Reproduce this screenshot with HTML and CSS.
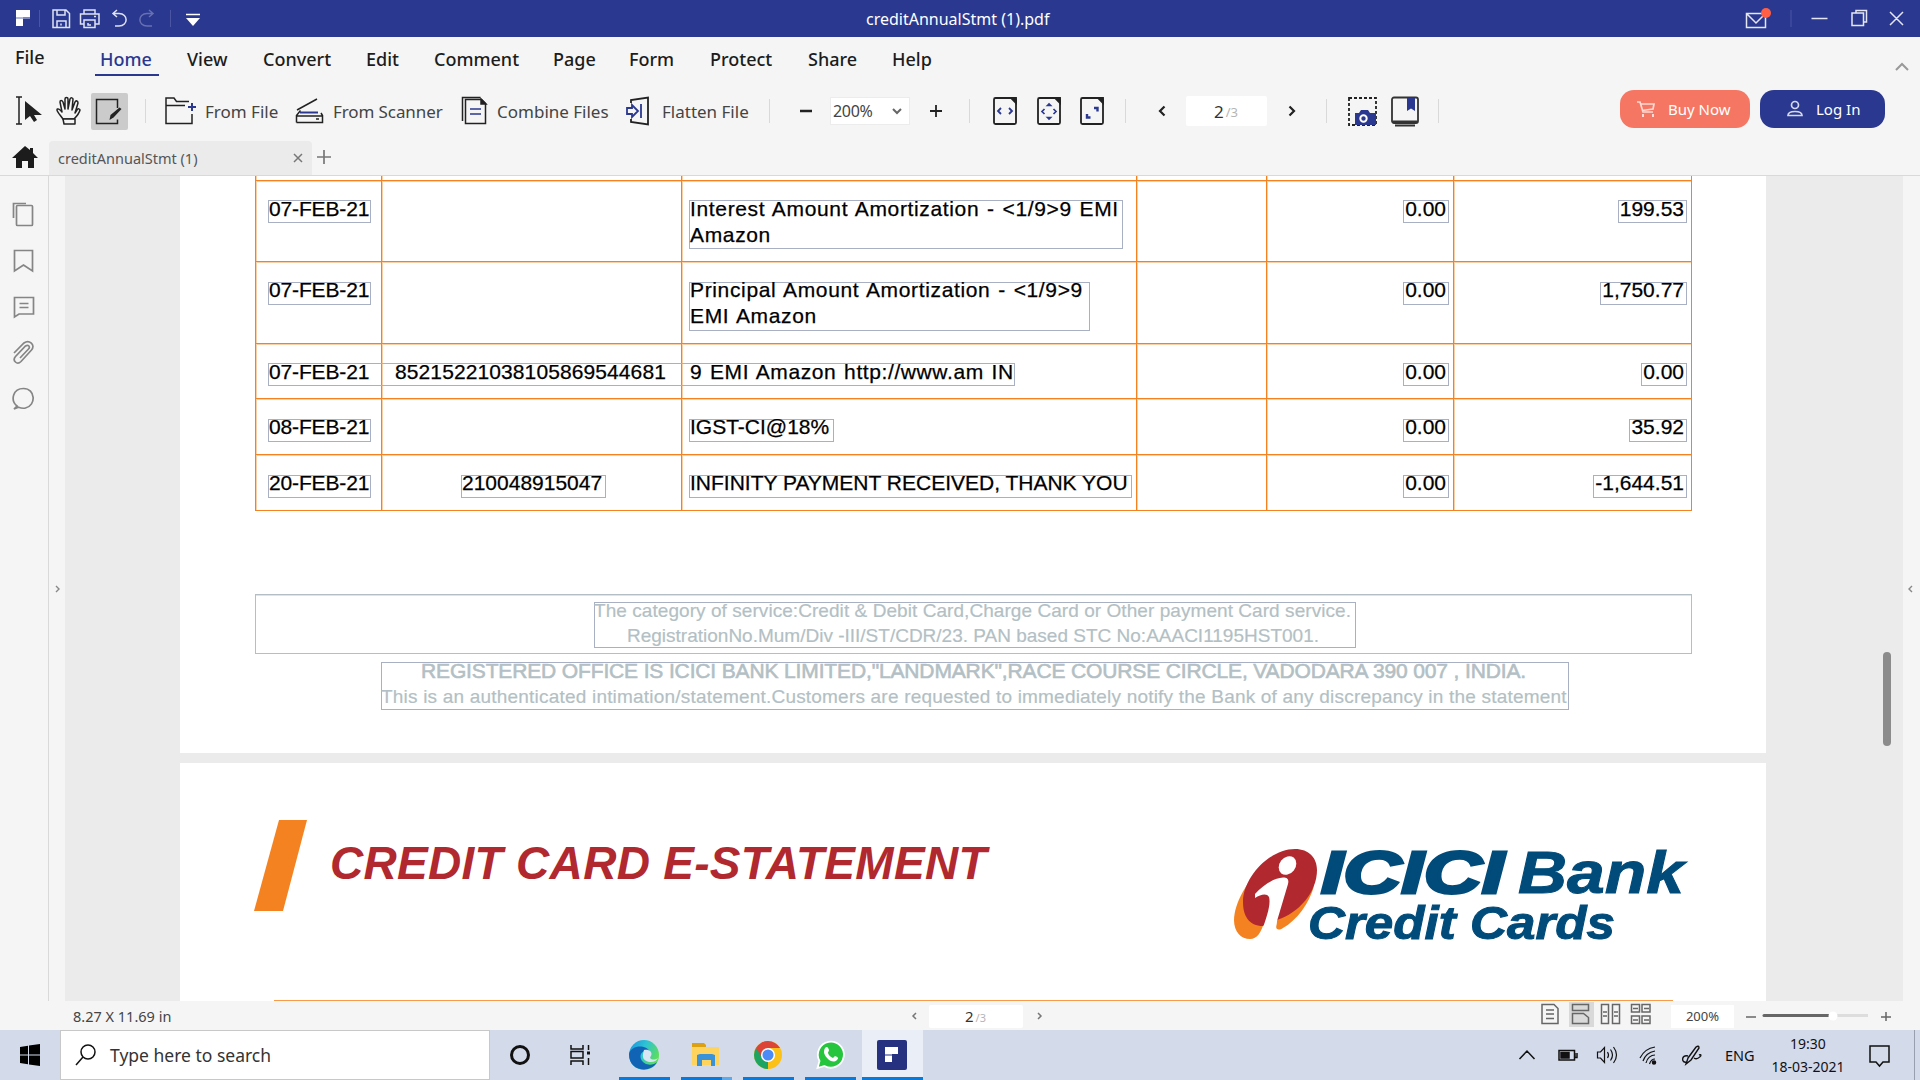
FILE: index.html
```html
<!DOCTYPE html>
<html lang="en">
<head>
<meta charset="utf-8">
<title>creditAnnualStmt (1).pdf</title>
<link rel="stylesheet" href="styles.css">
</head>
<body>
<div class="app">
  <header class="titlebar">
    <svg class="title-tools" width="220" height="37" viewBox="0 0 220 37" fill="none" stroke="#dfe2f2" stroke-width="1.5">
      <path d="M16 10h14v7h-7v9h-7z" fill="#fff" stroke="none"/><path d="M16 18h14" stroke="#9aa2d0"/>
      <path d="M39.500 10v17M170.500 10v17" stroke="#4a55a3" stroke-width="1"/>
      <path d="M53 10h13l3.500 3.500V27.500H53zM57 10v5h8v-5M57 27v-6h9v6M61 23.500v2"/>
      <path d="M84 14v-4h11v4M84 24h-3.500V14h18.500V24H95M84 20h11v7.500H84zM88 23v2h3M94 16.500h2"/>
      <path d="M117 10l-4 3.500 4 3.500M113 13.500h6c9.500 0 9.500 12.500 0 12.500h-4"/>
      <path d="M149 10l4 3.500-4 3.500M153 13.500h-6c-9.500 0-9.500 12.500 0 12.500h5" stroke="#6670b2"/>
      <path d="M186 14.500h14" stroke="#fff"/><path d="M186 18h14l-7 8z" fill="#fff" stroke="none"/>
    </svg>
    <span class="doc-title">creditAnnualStmt (1).pdf</span>
    <svg width="180" height="37" viewBox="1740 0 180 37" fill="none" stroke="#e4e6f4" stroke-width="1.500">
      <path d="M1746.500 13.500h19v14h-19zM1747 14l9 9 9-9"/><circle cx="1766" cy="13" r="5" fill="#ff5f45" stroke="none"/>
      <path d="M1791 10v17" stroke="#4a55a3" stroke-width="1"/>
      <path d="M1811.500 18.500h16M1852 13h11.500v12.500H1852zM1856 13v-2.500h10.500V22h-3M1890 12l13 13M1903 12l-13 13"/>
    </svg>
  </header>

  <nav class="menu">
    <span class="file">File</span><span class="active">Home</span><span>View</span><span>Convert</span><span>Edit</span><span>Comment</span><span>Page</span><span>Form</span><span>Protect</span><span>Share</span><span>Help</span>
    <svg width="16" height="10" viewBox="0 0 16 10" fill="none" stroke="#999" stroke-width="2"><path d="M2 8l6-6 6 6"/></svg>
  </nav>

  <div class="ribbon">
    <svg width="30" height="30" viewBox="0 0 30 30"><path d="M1 1h6M4 1v27M1 28h6" stroke="#222" stroke-width="1.500" fill="none"/><path d="M10 5v19l5-4 4 6 3-2-3-5h8z" fill="#222"/></svg>
    <svg width="28" height="30" viewBox="0 0 28 30" fill="#f5f5f5" stroke="#222" stroke-width="1.500" stroke-linejoin="round"><path d="M8 23C6 20 2 16 2 14c0-2 3-1 5 2L5 6c0-2 2-2 3 0l2 7V3c0-2 3-2 3 0v10l2-10c1-2 3-1 3 0l-1 11 3-8c1-2 3-1 3 1l-3 10 2-3c1-2 3-1 3 0-1 4-4 7-6 9z"/><path d="M8 23h12v5H9z"/></svg>
    <span class="tool-on"><svg width="37" height="37" viewBox="0 0 37 37"><path d="M26.500 15V6.500H5.500v24h21v-4" fill="none" stroke="#222" stroke-width="1.500"/><path d="M18.500 27l1-5 9-7.500 2 1.500-8 8.500z" fill="#222"/></svg></span>
    <i class="sep"></i>
    <svg width="32" height="30" viewBox="0 0 32 30" fill="none" stroke="#222" stroke-width="1.500"><path d="M27 18v9.500H1V2h8l2.500 3.500H24M1 9.500h19"/><path d="M27 7v8M23 11h8" stroke="#2a388f" stroke-width="2"/></svg>
    <span>From File</span>
    <svg width="30" height="30" viewBox="0 0 30 30" fill="none" stroke="#222" stroke-width="1.500"><path d="M2 14L22 3M1.500 26.500v-7l4-5M26 17l1.500 2.500v7h-26M2 20h25M21 23h3"/><path d="M5 16.500h18" stroke="#2a388f" stroke-width="2"/></svg>
    <span class="scan">From Scanner</span>
    <svg width="28" height="30" viewBox="0 0 28 30" fill="none" stroke="#222" stroke-width="1.500"><path d="M4.500 3.500h16l4 4v20h-20zM1.500 25V1.500h18"/><path d="M20 3v5h5z" fill="#222"/><path d="M9 13h11M9 18h11" stroke="#2a388f"/></svg>
    <span>Combine Files</span>
    <svg width="28" height="30" viewBox="0 0 28 30" fill="none" stroke="#222" stroke-width="1.800"><path d="M5 7V4l17-2.500v27L5 26v-3"/><path d="M1 12h5V9l6 6-6 6v-3H1zM15 8v14" stroke="#2a388f" stroke-width="1.800"/></svg>
    <span>Flatten File</span>
    <i class="sep"></i>
    <svg width="14" height="14" viewBox="0 0 14 14" stroke="#222" stroke-width="2.500"><path d="M1 7h12"/></svg>
    <div class="zoom-select"><span>200%</span><svg width="12" height="10" viewBox="0 0 12 10" fill="none" stroke="#666" stroke-width="2"><path d="M2 3l4 4 4-4"/></svg></div>
    <svg width="14" height="14" viewBox="0 0 14 14" stroke="#222" stroke-width="1.800"><path d="M1 7h12M7 1v12"/></svg>
    <i class="sep"></i>
    <svg width="26" height="30" viewBox="0 0 26 30" fill="none" stroke="#222" stroke-width="1.800"><rect x="2" y="2" width="22" height="26" rx="1.500"/><path d="M19 2h5v5z" fill="#222"/><path d="M9 12l-3 3 3 3M17 12l3 3-3 3" stroke="#2a388f"/></svg>
    <svg width="26" height="30" viewBox="0 0 26 30" fill="none" stroke="#222" stroke-width="1.800"><rect x="2" y="2" width="22" height="26" rx="1.500"/><path d="M19 2h5v5z" fill="#222"/><path d="M8.500 13L6 15.500 8.500 18M17.500 13l2.500 2.500-2.500 2.500M11.500 9.500L13 8l1.500 1.500zM11.500 21.500L13 23l1.500-1.500z" stroke="#2a388f" stroke-width="1.700"/></svg>
    <svg width="26" height="30" viewBox="0 0 26 30" fill="none" stroke="#222" stroke-width="1.800"><rect x="2" y="2" width="22" height="26" rx="1.500"/><path d="M19 2h5v5z" fill="#222"/><path d="M15 12h3.500v3.500M8 18v3.500h3.500" stroke="#2a388f" stroke-width="2.400"/></svg>
    <i class="sep"></i>
    <svg width="10" height="14" viewBox="0 0 10 14" fill="none" stroke="#222" stroke-width="2.200"><path d="M7.500 2.500L3 7l4.500 4.500"/></svg>
    <div class="page-box">2<small>/3</small></div>
    <svg width="10" height="14" viewBox="0 0 10 14" fill="none" stroke="#222" stroke-width="2.200"><path d="M2.500 2.500L7 7l-4.500 4.500"/></svg>
    <i class="sep"></i>
    <svg width="32" height="32" viewBox="0 0 32 32" fill="none"><path d="M3 3h27v27H3z" stroke="#222" stroke-width="1.800" stroke-dasharray="3 2"/><path d="M9 30V18h4l2-3h7l2 3h6v12z" fill="#2a388f"/><circle cx="17.500" cy="23.500" r="3.200" stroke="#fff" stroke-width="2"/></svg>
    <svg width="30" height="32" viewBox="0 0 30 32" fill="none" stroke="#333" stroke-width="1.800"><rect x="2" y="2.500" width="26" height="25.500" rx="2"/><path d="M5 30.500h20M3 26.500h24"/><path d="M17 3h8v13l-4-2.500-4 2.500z" fill="#2a388f" stroke="none"/></svg>
    <i class="sep"></i>
    <div class="btn buy"><svg width="20" height="20" viewBox="0 0 20 20" fill="none" stroke="#ffd9d2" stroke-width="1.700"><path d="M1 3h3l3 10h10M5 5h13l-1 5-11 1.500"/><path d="M6 16.500h2M16 16.500h2" stroke-width="3"/></svg><span>Buy Now</span></div>
    <div class="btn login"><svg width="18" height="20" viewBox="0 0 18 20" fill="none" stroke="#d5d9ee" stroke-width="1.700"><circle cx="9" cy="6" r="3.500"/><path d="M2 16.500c0-2.500 3-4 7-4s7 1.500 7 4z"/></svg><span>Log In</span></div>
  </div>

  <div class="tabs">
    <svg width="26" height="24" viewBox="0 0 26 24" fill="#1c1c1c"><path d="M13 1L0 13h4v10h6v-7h6v7h6V13h4l-5-5V3h-3v2z"/></svg>
    <div class="tab"><span>creditAnnualStmt (1)</span><svg width="12" height="12" viewBox="0 0 12 12" stroke="#777" stroke-width="1.500"><path d="M2 2l8 8M10 2l-8 8"/></svg></div>
    <svg width="14" height="14" viewBox="0 0 14 14" stroke="#777" stroke-width="1.700"><path d="M0 7h14M7 0v14"/></svg>
  </div>

  <main class="work">
    <aside class="side">
      <svg width="24" height="28" viewBox="0 0 24 28"><rect x="5.500" y="4.500" width="16" height="20" rx="1"/><path d="M2.500 17V2.500H15"/></svg>
      <svg width="24" height="28" viewBox="0 0 24 28"><path d="M3.500 3.500h18v20.500l-9-6-9 6z"/></svg>
      <svg width="24" height="28" viewBox="0 0 24 28"><path d="M3.500 4.500h19V21H8l-4.500 3zM8.500 10.500h9M8.500 14.500h9"/></svg>
      <svg width="24" height="28" viewBox="0 0 24 28"><path d="M3 14L13 4c5-4 12 2 7.500 7L10 22.500c-4 4-9-1-5.500-5L14.500 7c3-2 5 1 3 3L9 19"/></svg>
      <svg width="24" height="28" viewBox="0 0 24 28"><path d="M6 21C-1 15 2 3.500 12.500 3.500c12 0 13 17 2 19.500-3 .7-5 0-7-.8L3 24z"/></svg>
    </aside>
    <div class="handle"><svg width="6" height="8" viewBox="0 0 6 8"><path d="M1 1l3 3-3 3"/></svg></div>
    <div class="canvas">
      <section class="page first">
        <div class="table">
          <div class="row stub"><div></div><div></div><div></div><div></div><div></div><div></div></div>
          <div class="row h81">
            <div class="date"><p class="box">07-FEB-21</p></div><div></div>
            <div class="desc"><p class="box lower two w434">Interest Amount Amortization - &lt;1/9&gt;9 EMI<br>Amazon</p></div><div></div>
            <div class="num"><p class="box">0.00</p></div><div class="num"><p class="box">199.53</p></div>
          </div>
          <div class="row h82 drop">
            <div class="date"><p class="box">07-FEB-21</p></div><div></div>
            <div class="desc"><p class="box lower two w401">Principal Amount Amortization - &lt;1/9&gt;9<br>EMI Amazon</p></div><div></div>
            <div class="num"><p class="box">0.00</p></div><div class="num"><p class="box">1,750.77</p></div>
          </div>
          <div class="row h55 merged">
            <div class="date"><p class="box bare">07-FEB-21</p></div><div class="ref"><p class="box bare long">85215221038105869544681</p></div>
            <div class="desc"><p class="box bare lower">9 EMI Amazon http://www.am IN</p></div><div></div>
            <div class="num"><p class="box">0.00</p></div><div class="num"><p class="box">0.00</p></div>
            <i class="span-box"></i>
          </div>
          <div class="row h56 drop">
            <div class="date"><p class="box">08-FEB-21</p></div><div></div>
            <div class="desc"><p class="box w145">IGST-CI@18%</p></div><div></div>
            <div class="num"><p class="box">0.00</p></div><div class="num"><p class="box">35.92</p></div>
          </div>
          <div class="row h56 drop">
            <div class="date"><p class="box">20-FEB-21</p></div><div class="ref"><p class="box w145">210048915047</p></div>
            <div class="desc"><p class="box w443">INFINITY PAYMENT RECEIVED, THANK YOU</p></div><div></div>
            <div class="num"><p class="box">0.00</p></div><div class="num"><p class="box">-1,644.51</p></div>
          </div>
        </div>
        <div class="notice">
          <div class="notice-text"><p class="n1">The category of service:Credit &amp; Debit Card,Charge Card or Other payment Card service.</p><p class="n2">RegistrationNo.Mum/Div -III/ST/CDR/23. PAN based STC No:AAACI1195HST001.</p></div>
        </div>
        <div class="office"><p class="n3">REGISTERED OFFICE IS ICICI BANK LIMITED,"LANDMARK",RACE COURSE CIRCLE, VADODARA 390 007 , INDIA.</p><p class="n4">This is an authenticated intimation/statement.Customers are requested to immediately notify the Bank of any discrepancy in the statement</p></div>
      </section>
      <section class="page second">
        <div class="heading">
          <svg width="54" height="92" viewBox="0 0 54 92"><path d="M25 0h28L29 91H0z" fill="#f58220"/></svg>
          <h1>CREDIT CARD E-STATEMENT</h1>
          <svg class="logo" width="460" height="100" viewBox="1230 845 460 100">
            <path d="M1265 862C1246 880 1233 904 1233 920C1233 932 1240 939 1249 939C1256 939 1260 933 1264 920z" fill="#f58220"/>
            <path d="M1277 915L1275 926C1275 930 1278 930.500 1282 928C1296 920 1308 904 1313 886z" fill="#f58220"/>
            <path d="M1294 849C1308 849 1316 858 1316 870C1316 892 1298 913 1276 920L1262 926C1248 926 1242 916 1242 902C1242 878 1268 849 1294 849z" fill="#b1282f"/>
            <ellipse cx="1286.500" cy="865.500" rx="8" ry="10" transform="rotate(38 1286.500 865.500)" fill="#fff"/>
            <path d="M1254 894C1262 885 1273 878 1282 877.500C1287 877.500 1288 880 1287 884L1276 921L1275 928L1261 930C1266 917 1270 904 1268 897C1266 893 1260 894 1254 898z" fill="#fff"/>
            <g font-family="Liberation Sans, sans-serif" font-weight="700" font-style="italic" fill="#004b79" stroke="#004b79">
              <text x="1320" y="893" font-size="60" stroke-width="3" textLength="183" lengthAdjust="spacingAndGlyphs">ICICI</text>
              <text x="1517" y="893" font-size="60" stroke-width="1" textLength="166" lengthAdjust="spacingAndGlyphs">Bank</text>
              <text x="1307" y="939" font-size="46" stroke-width="1" textLength="307" lengthAdjust="spacingAndGlyphs">Credit Cards</text>
            </g>
          </svg>
        </div>
        <div class="rule"></div>
      </section>
    </div>
    <div class="gutter"><svg width="6" height="8" viewBox="0 0 6 8"><path d="M5 1L2 4l3 3"/></svg></div>
    <i class="thumb"></i>
  </main>

  <footer class="status">
    <span class="dims">8.27 X 11.69 in</span>
    <svg width="6" height="8" viewBox="0 0 6 8" fill="none" stroke="#777" stroke-width="1.500"><path d="M5 1L2 4l3 3"/></svg>
    <div class="page-box small">2<small>/3</small></div>
    <svg width="6" height="8" viewBox="0 0 6 8" fill="none" stroke="#777" stroke-width="1.500"><path d="M1 1l3 3-3 3"/></svg>
    <svg class="views" width="118" height="28" viewBox="1537 1001 118 28" fill="none" stroke="#666" stroke-width="1.500">
      <path d="M1569 1002h25v25h-25z" fill="#d9d9d9" stroke="none"/>
      <path d="M1542 1004.500h12l4 4v15h-16zM1546 1010h8M1546 1014h8M1546 1018.500h8"/>
      <path d="M1572.500 1004.500h16v6h-16zM1572.500 1023.500v-10h11l5 4v6z"/>
      <path d="M1601.500 1004.500h7v19h-7zM1612.500 1004.500h7v19h-7zM1603 1012h4M1603 1016h4M1614 1012h4M1614 1016h4"/>
      <path d="M1631.500 1004.500h8v7.500h-8zM1642 1004.500h8v7.500h-8zM1631.500 1016h8v7.500h-8zM1642 1016h8v7.500h-8zM1633 1008.500h5M1644 1008.500h5M1633 1020h5M1644 1020h5"/>
    </svg>
    <span class="percent">200%</span>
    <svg width="10" height="10" viewBox="0 0 10 10" stroke="#666" stroke-width="1.500"><path d="M0 6h10"/></svg>
    <svg width="108" height="10" viewBox="0 0 108 10"><path d="M2 4.500h70" stroke="#666" stroke-width="3" stroke-linecap="round"/><path d="M72 4.500h34" stroke="#ddd" stroke-width="3"/><circle cx="71" cy="5" r="4.500" fill="#fff"/></svg>
    <svg width="10" height="10" viewBox="0 0 10 10" stroke="#666" stroke-width="1.500"><path d="M0 6h10M5 1v10"/></svg>
  </footer>

  <div class="taskbar">
    <svg width="60" height="50" viewBox="0 0 60 50"><path d="M20 17l8-1.300V24.500h-8zM29 15.500l11-1.500v10.500H29zM20 25.500h8v8.800L20 33zM29 25.500h11V36l-11-1.500z"/></svg>
    <div class="search"><svg width="24" height="24" viewBox="0 0 24 24" fill="none" stroke="#111" stroke-width="1.500"><circle cx="14" cy="9" r="7"/><path d="M9 14l-7 8"/></svg><span>Type here to search</span></div>
    <svg class="apps" width="434" height="50" viewBox="490 1030 434 50">
      <defs><linearGradient id="eg" x1="0" y1="0" x2="1" y2="0.500"><stop offset="0" stop-color="#1b8fdc"/><stop offset=".5" stop-color="#2cc3d5"/><stop offset="1" stop-color="#5ede5a"/></linearGradient></defs>
      <path d="M862 1030h61v50h-61z" fill="#eaeef7"/>
      <circle cx="520" cy="1055" r="8.500" fill="none" stroke="#111" stroke-width="3"/>
      <g fill="none" stroke="#111" stroke-width="1.500"><path d="M571 1045v4h12v-4M571 1065v-4h12v4M571 1051.500h12v6.500h-12zM588.500 1045v5M588.500 1058v7"/><path d="M588.500 1051.500v3" stroke-width="3"/></g>
      <circle cx="644" cy="1055" r="15" fill="url(#eg)"/>
      <path d="M629 1054c2-9 17-10 21-2-7-3-11 2-9 7 3 7 12 7 16 3-5 11-28 11-28-8z" fill="#1163b6"/>
      <path d="M644 1050c5-1 9 2 7 6-3 3 3 5 7 2-2 6-14 5-15-1-.5-3 .5-5 1-7z" fill="#d9e5f2"/>
      <path d="M692 1043h12l2 2v3h-14z" fill="#dea013"/><path d="M692 1047h27v18h-27z" fill="#ffd45e"/><path d="M697 1066v-11l3-1h12l3 1v11h-4v-6h-9v6z" fill="#3a92d8"/>
      <circle cx="768" cy="1055" r="14" fill="#fbc116"/><path d="M768 1055L768 1069A14 14 0 0 1 755.900 1048z" fill="#1da462"/><path d="M768 1048h12.100a14 14 0 0 0-24.200 0l6 9z" fill="#db4437"/><circle cx="768" cy="1055" r="6.300" fill="#4c8bf5" stroke="#fff" stroke-width="1.500"/>
      <path d="M817.500 1068l2-7a13 13 0 1 1 5 5z" fill="#25c53d" stroke="#fff" stroke-width="1.800"/><path d="M825 1048c2-2 3-1 4 2 0 1-1 2-1 3 1 3 3 4 5 5l2-2c3 1 4 2 2 4-3 3-7 1-9-1-4-4-5-7-3-11z" fill="#fff"/>
      <rect x="877" y="1040" width="30" height="30" rx="2" fill="#26327f"/><path d="M885 1047h13v7h-6v8h-7z" fill="#fff"/><path d="M885 1055h7" stroke="#8f96c4" stroke-width="2"/>
      <path d="M619 1077h51v3h-51zM681 1077h41v3h-41zM743 1077h51v3h-51zM805 1077h51v3h-51zM862 1077h61v3h-61z" fill="#0b79d7"/><path d="M722 1077h10v3h-10z" fill="#5fa9e8"/>
    </svg>
    <svg class="tray" width="192" height="50" viewBox="1515 1030 192 50" fill="none" stroke="#111" stroke-width="1.500">
      <path d="M1519.500 1059l7.500-8 7.500 8M1559 1050.500h15.500v9.500H1559zM1575 1053v4.500h2v-4.500"/><path d="M1561 1052.500h8v5.500h-8z" fill="#111"/>
      <path d="M1597.500 1052h3l4-4.500v15l-4-4.500h-3zM1607.500 1052q2 3 0 6M1610.500 1049.500q4 5.500 0 11M1613.500 1047q6 8 0 16" stroke-width="1.200"/>
      <path d="M1640 1058c3-6 8-10 15-11M1643 1061c2-6 6-9 12-10M1646 1063c1-5 5-8 9-8M1649.500 1064c1-3 3-5 5.500-5" stroke-width="1.200"/><circle cx="1654" cy="1062.500" r="1.500" fill="#111"/>
      <path d="M1688 1058l8-11q3-2 3 1l-8 12-5 4zM1688 1056c-7-2-7 8-1 6M1694 1058c4 3 10-5 5-3" stroke-width="1.400"/>
    </svg>
    <span class="lang">ENG</span>
    <div class="clock"><span>19:30</span><span>18-03-2021</span></div>
    <svg width="60" height="50" viewBox="1860 1030 60 50" fill="none" stroke="#111" stroke-width="1.500"><path d="M1870 1046h19v16h-6l-3.500 4-3.500-4h-6z"/><path d="M1914.500 1030v50" stroke="#98a0b0" stroke-width="1"/></svg>
  </div>
</div>
</body>
</html>
```
FILE: styles.css
```css
* { box-sizing: border-box; }
body { margin: 0; font-family: "Noto Sans", "Open Sans", sans-serif; color: #222; background: #f5f5f5; }
p, h1 { margin: 0; }
svg { display: block; flex: none; }
span { white-space: nowrap; }
.app { width: 1920px; height: 1080px; display: flex; flex-direction: column; overflow: hidden; }

.titlebar { height: 37px; background: #2a388f; display: grid; grid-template-columns: 866px 874px 180px; align-items: center; }
.doc-title { color: #fff; font-size: 16px; }

.menu { height: 51px; display: grid; grid-template-columns: 80px 92px 76px 103px 68px 119px 76px 81px 98px 84px 1002px 16px; padding: 0 0 7px 15px; align-items: center; font-size: 18px; font-weight: 500; color: #1c1c1c; }
.menu .file { margin-top: -4px; }
.menu .active { color: #2a388f; justify-self: start; padding: 4px 7px 2px 5px; border-bottom: 2px solid #2a388f; line-height: 26px; }
.menu svg { margin-top: 15px; }

.ribbon { height: 47px; display: grid; align-items: center; padding: 0 0 1px 15px; font-size: 17px; color: #444;
  grid-template-columns: 40px 36px 54px 20px 40px 90px 38px 128px 36px 129px 36px 107px 30px 31px 99px 40px 23px 44px 43px 46px 32px 29px 101px 39px 20px 44px 48px 182px 140px 125px; }
.scan { letter-spacing: -0.1px; }
.sep { width: 1px; height: 24px; background: #d9d9d9; }
.tool-on { width: 37px; height: 37px; background: #cbcbcb; border-radius: 2px; }
.zoom-select { width: 80px; height: 28px; background: #fff; border: 1px solid #ececec; display: flex; align-items: center; justify-content: space-between; padding: 0 6px 0 2px; font-size: 16px; letter-spacing: -0.3px; }
.page-box { width: 81px; height: 30px; background: #fff; border-radius: 2px; display: flex; align-items: center; padding-left: 28px; font-size: 17px; color: #333; }
.page-box small { font-size: 13px; color: #b5b5b5; margin: 2px 0 0 2px; }
.btn { height: 38px; margin-top: -4px; border-radius: 14px; color: #fff; font-size: 15px; display: flex; align-items: center; }
.buy { width: 130px; background: #f57663; padding-left: 16px; gap: 12px; }
.login { width: 125px; background: #2a388f; padding-left: 26px; gap: 12px; }

.tabs { height: 41px; display: flex; align-items: flex-end; padding-left: 12px; border-bottom: 1px solid #d9d9d9; }
.tabs > svg:first-child { margin-bottom: 6px; }
.tabs > svg:last-child { margin: 0 0 11px 5px; }
.tab { width: 263px; height: 34px; margin-left: 11px; background: #ebebeb; border-radius: 4px 4px 0 0; display: flex; align-items: center; justify-content: space-between; padding: 0 8px 0 9px; font-size: 14.5px; color: #555; }

.work { height: 825px; display: flex; position: relative; overflow: hidden; }
.side { width: 49px; border-right: 1px solid #d9d9d9; display: flex; flex-direction: column; gap: 18px; padding: 25px 0 0 11px; }
.side svg { fill: none; stroke: #858585; stroke-width: 1.7; }
.handle { width: 16px; display: flex; align-items: center; padding-left: 6px; }
.handle svg, .gutter svg { fill: none; stroke: #888; stroke-width: 1.4; }
.canvas { width: 1838px; background: #ebebeb; padding-left: 115px; display: flex; flex-direction: column; gap: 10px; }
.gutter { width: 17px; display: flex; align-items: center; padding-left: 4px; }
.thumb { position: absolute; left: 1883px; top: 476px; width: 8px; height: 94px; border-radius: 4px; background: #8b8b8b; }

.page { width: 1586px; background: #fff; padding-left: 75px; flex: none; font-family: "Liberation Sans", Arial, sans-serif; color: #000; }
.first { height: 577px; }
.second { height: 238px; display: flex; flex-direction: column; }
.table { width: 1437px; border-bottom: 1px solid #f58220; }
.row { display: grid; grid-template-columns: 126px 300px 455px 130px 187px 239px; position: relative; }
.row > div { border-left: 1px solid #f58220; border-top: 1px solid #f58220; box-shadow: inset 1px 1px 0 #fbcfa6; padding-top: 19px; }
.row > div:nth-child(6) { border-right: 1px solid #f58220; }
.stub { height: 4px; }
.stub > div { border-top: 0; padding: 0; box-shadow: inset 1px 0 0 #fbcfa6; }
.h81 { height: 81px; } .h82 { height: 82px; } .h55 { height: 55px; } .h56 { height: 56px; }
.box { height: 23px; border: 1px solid #a9b0c4; font-size: 21px; line-height: 26px; white-space: nowrap; text-indent: -1px; -webkit-text-stroke: 0.25px #000; }
.box::before { content: ""; display: block; height: 0; margin-top: -5px; }
.drop .box { margin-top: 1px; }
.drop .box::before { margin-top: -6px; }
.bare { border-color: transparent; }
.two { height: 49px; }
.date { padding-left: 12px; }
.date .box { width: 103px; letter-spacing: -0.15px; }
.ref { display: flex; justify-content: center; padding-left: 4px; }
.ref .box { text-indent: 0; }
.ref .long { letter-spacing: 0.1px; margin-left: -6px; }
.desc { padding-left: 7px; }
.lower { letter-spacing: 0.65px; word-spacing: 1.3px; }
.merged .lower { letter-spacing: 0.6px; }
.w434 { width: 434px; } .w401 { width: 401px; } .w145 { width: 145px; } .w443 { width: 443px; }
.num { display: flex; justify-content: flex-end; padding-right: 4px; }
.num .box { padding: 0 2px 0 1px; text-indent: 0; }
.row .span-box { position: absolute; left: 13px; top: 20px; width: 747px; height: 23px; border: 1px solid #a9b0c4; }

.notice { width: 1437px; height: 60px; margin-top: 83px; border: 1px solid #b3bfc4; box-shadow: inset 0 1px #dfe5e7; padding: 7px 0 0 338px; color: #b3bfc4; }
.notice p, .office p { white-space: nowrap; width: max-content; }
.notice-text { width: 762px; height: 46px; border: 1px solid #a9b0c4; font-size: 19px; line-height: 25px; -webkit-text-stroke: 0.2px #b3bfc4; }
.n1 { letter-spacing: 0.06px; margin: -5px 0 0 -1px; }
.n2 { padding-left: 32px; }
.office { width: 1188px; height: 48px; margin: 8px 0 0 126px; border: 1px solid #a9b0c4; color: #b3bfc4; line-height: 25px; }
.n3 { font-size: 21px; letter-spacing: -0.14px; margin: -5px 0 0 39px; -webkit-text-stroke: 0.6px #b3bfc4; }
.n4 { font-size: 19px; letter-spacing: 0.2px; margin: 1px 0 0 -1px; -webkit-text-stroke: 0.2px #b3bfc4; }

.heading { height: 237px; display: flex; align-items: flex-start; padding-top: 57px; margin-left: -1px; }
.heading h1 { font-size: 46px; line-height: 54px; letter-spacing: 0.3px; font-style: italic; color: #b1282f; margin: 16px 0 0 22px; width: 901px; white-space: nowrap; }
.logo { margin-top: 25px; }
.rule { width: 1399px; height: 1px; margin-left: 19px; background: #f79a4a; }

.status { height: 29px; display: grid; align-items: center; grid-template-columns: 838px 18px 108px 500px 134px 75px 16px 119px 10px; padding-left: 73px; font-size: 14.5px; color: #444; }
.page-box.small { width: 94px; height: 23px; padding-left: 36px; font-size: 15px; margin-top: 1px; }
.small small { font-size: 11px; }
.views { margin-top: -2px; }
.percent { width: 63px; height: 23px; background: #fff; font-size: 13px; line-height: 22px; text-align: center; margin-top: 1px; }
.taskbar { height: 50px; background: #d3daea; display: flex; color: #111; }
.search { width: 430px; height: 50px; background: #fff; border: 1px solid #c8c8c8; display: flex; align-items: center; padding-left: 13px; gap: 12px; font-size: 17.5px; color: #333; }
.tray { margin-left: 591px; }
.lang { width: 46px; padding-left: 18px; line-height: 50px; font-size: 14.5px; }
.clock { width: 107px; padding: 2px 0 0 3px; display: flex; flex-direction: column; align-items: center; font-size: 14px; line-height: 23px; }
```
